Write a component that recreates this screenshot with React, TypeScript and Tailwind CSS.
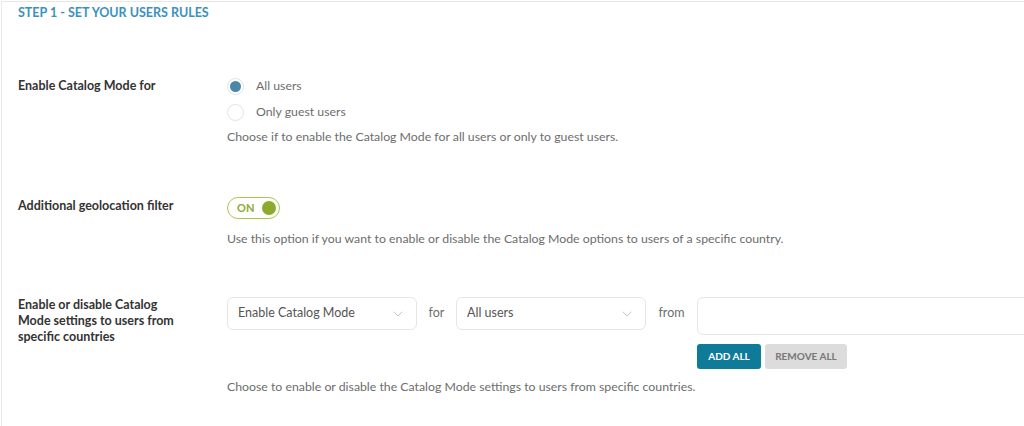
import { ChevronDown } from "lucide-react";

const font = { fontFamily: 'Lato, "Noto Sans", sans-serif' };

function Label({ children }: { children: React.ReactNode }) {
  return (
    <div className="w-[209px] shrink-0 text-[12.5px] font-bold leading-4 text-[#333]">
      {children}
    </div>
  );
}

function Radio({ checked, label }: { checked?: boolean; label: string }) {
  return (
    <label className="flex items-center h-[26px]">
      <span className="w-[17px] h-[17px] rounded-full border border-[#e2e2e2] flex items-center justify-center mr-[12px] bg-white">
        {checked && <span className="w-[11px] h-[11px] rounded-full bg-[#4b87a8]" />}
      </span>
      <span className="text-[12.3px] text-[#6d6d6d]">{label}</span>
    </label>
  );
}

function Select({ value }: { value: string }) {
  return (
    <div className="w-[190px] h-[33px] border border-[#e6e6e6] rounded-[6px] flex items-center justify-between pl-[10px] pr-[10px] bg-white">
      <span className="text-[12.5px] text-[#555]">{value}</span>
      <ChevronDown size={16} strokeWidth={1.2} className="text-[#b8b8b8]" />
    </div>
  );
}

export default function App() {
  return (
    <div style={font} className="w-[1024px] h-[426px] bg-white overflow-hidden">
      <div className="h-full border-t border-l border-[#e8e8e8] ml-[1px] mt-[1px] pl-[16px]">
        <h2 className="pt-[3px] text-[12.5px] leading-4 font-bold uppercase text-[#3b91bd]">
          Step 1 - Set your users rules
        </h2>

        <div className="flex mt-[52px]">
          <div className="pt-[5px]"><Label>Enable Catalog Mode for</Label></div>
          <div>
            <Radio checked label="All users" />
            <Radio label="Only guest users" />
            <p className="mt-[3px] text-[12.3px] leading-[18px] text-[#6d6d6d]">
              Choose if to enable the Catalog Mode for all users or only to guest users.
            </p>
          </div>
        </div>

        <div className="flex mt-[51px]">
          <div className="pt-[1px]"><Label>Additional geolocation filter</Label></div>
          <div>
            <div className="w-[53px] h-[22px] rounded-full border border-[#a9c94e] flex items-center justify-between pl-[9px] pr-[3px]">
              <span className="text-[11px] font-bold text-[#8cab2e]">ON</span>
              <span className="w-[14px] h-[14px] rounded-full bg-[#8cab2e]" />
            </div>
            <p className="mt-[11px] text-[12.3px] leading-[18px] text-[#6d6d6d]">
              Use this option if you want to enable or disable the Catalog Mode options to users of a specific country.
            </p>
          </div>
        </div>

        <div className="flex mt-[49px]">
          <Label>
            Enable or disable Catalog
            <br />
            Mode settings to users from
            <br />
            specific countries
          </Label>
          <div className="flex-1">
            <div className="flex items-start">
              <Select value="Enable Catalog Mode" />
              <span className="w-[39px] h-[33px] flex items-center justify-center text-[12.5px] text-[#6d6d6d]">for</span>
              <Select value="All users" />
              <span className="w-[51px] h-[33px] flex items-center justify-center text-[12.5px] text-[#6d6d6d]">from</span>
              <div className="flex flex-col">
                <div className="w-[340px] h-[38px] border border-[#e6e6e6] rounded-[6px] bg-white" />
                <div className="flex gap-[4px] mt-[9px]">
                  <button className="w-[64px] h-[25px] rounded-[3px] bg-[#0f7b99] text-white text-[10px] font-bold">
                    ADD ALL
                  </button>
                  <button className="w-[82px] h-[25px] rounded-[3px] bg-[#dcdcdc] text-[#777] text-[10px] font-bold">
                    REMOVE ALL
                  </button>
                </div>
              </div>
            </div>
            <p className="mt-[9px] text-[12.3px] leading-[18px] text-[#6d6d6d]">
              Choose to enable or disable the Catalog Mode settings to users from specific countries.
            </p>
          </div>
        </div>
      </div>
    </div>
  );
}
